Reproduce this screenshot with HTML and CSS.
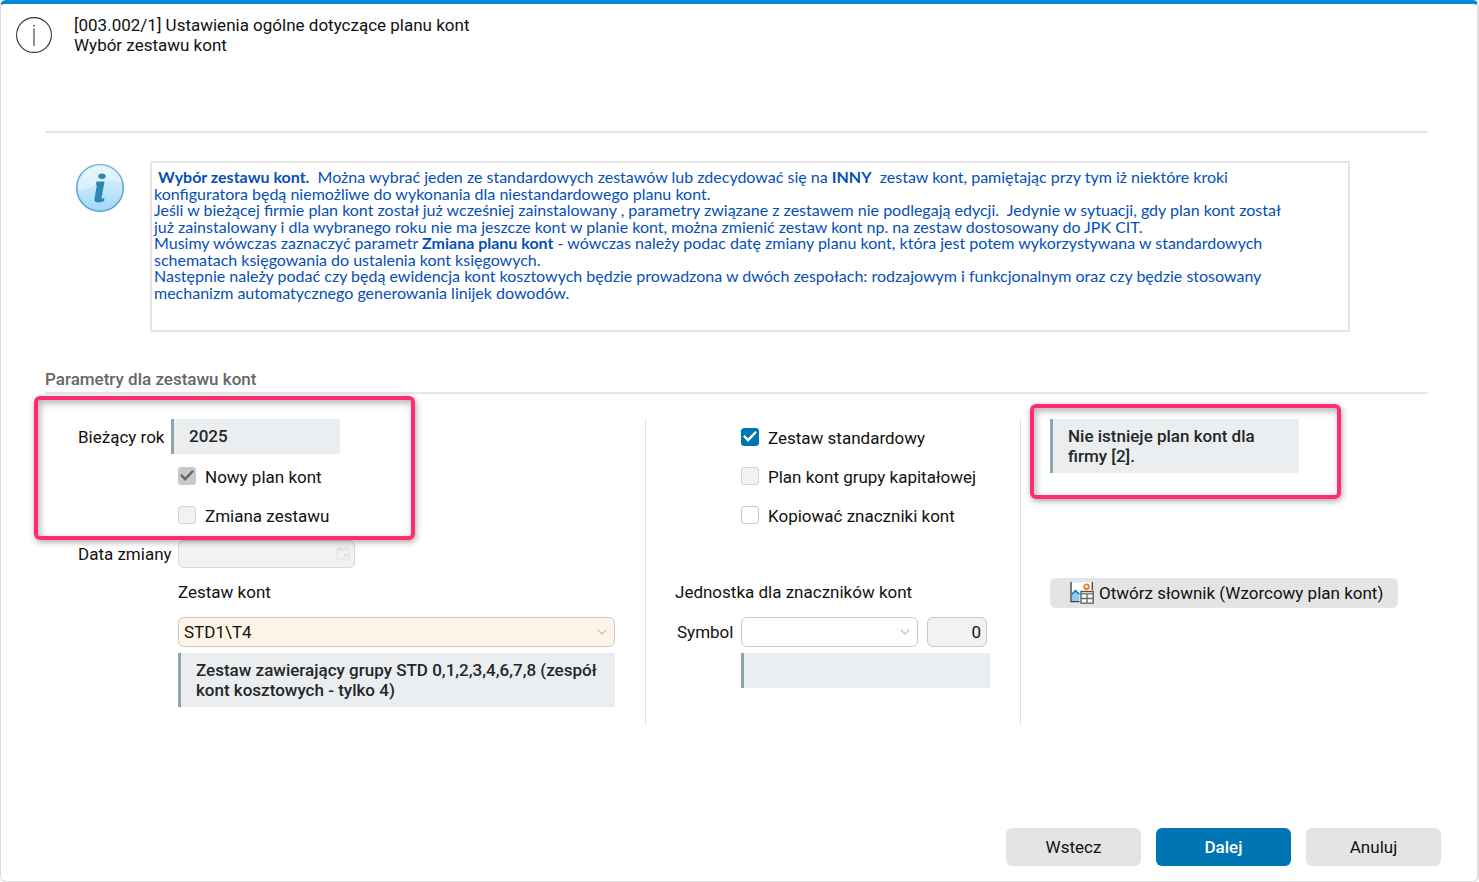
FILE: index.html
```
<!DOCTYPE html>
<html lang="pl">
<head>
  <meta charset="UTF-8">
  <meta name="viewport" content="width=device-width, initial-scale=1">
  <title>Ustawienia ogólne dotyczące planu kont</title>
  <link rel="stylesheet" href="styles.css">
</head>
<body>
  <form class="dialog">
    <header class="dialog-header">
      <svg class="header-icon" viewBox="0 0 36 36" aria-hidden="true">
        <circle cx="18" cy="18" r="17.4" fill="none" stroke="#333" stroke-width="1.1"/>
        <path d="M18 11.5V29" stroke="#555" stroke-width="1.3"/>
        <path d="M18 8V9.5" stroke="#555" stroke-width="1.6"/>
      </svg>
      <h1 class="title">[003.002/1] Ustawienia ogólne dotyczące planu kont<br>Wybór zestawu kont</h1>
    </header>

    <main class="content">
      <section class="info">
        <svg class="info-icon" viewBox="0 0 48 48" aria-hidden="true">
          <defs>
            <linearGradient id="ball" x1="0" y1="0" x2="0" y2="1">
              <stop offset="0" stop-color="#e4f5fd"/>
              <stop offset="0.5" stop-color="#c3e7fa"/>
              <stop offset="1" stop-color="#a0d7f7"/>
            </linearGradient>
          </defs>
          <circle cx="24" cy="24" r="23.3" fill="url(#ball)" stroke="#4ba3cb" stroke-width="1.4"/>
          <path d="M2 27C8 25 17 23 24 19C32 15 40 16 46 18A22.4 22.4 0 0 0 2 20Z" fill="#e8f7fe" opacity="0.6"/>
          <ellipse cx="26" cy="12.3" rx="3.7" ry="2.7" fill="#2b87b0"/>
          <path d="M20.5 17.5H28.5L25.6 33.8C25.4 35 27 34.5 28.4 34L28 37C24 39.2 18 39 18.4 35.2L20.8 21.2L19.8 20.5Z" fill="#2b87b0"/>
        </svg>
        <div class="info-text">
          <p>&nbsp;<b>Wybór zestawu kont.</b>&nbsp; Można wybrać jeden ze standardowych zestawów lub zdecydować się na <b>INNY</b>&nbsp; zestaw kont, pamiętając przy tym iż niektóre kroki<br>konfiguratora będą niemożliwe do wykonania dla niestandardowego planu kont.</p>
          <p>Jeśli w bieżącej firmie plan kont został już wcześniej zainstalowany , parametry związane z zestawem nie podlegają edycji.&nbsp; Jedynie w sytuacji, gdy plan kont został<br>już zainstalowany i dla wybranego roku nie ma jeszcze kont w planie kont, można zmienić zestaw kont np. na zestaw dostosowany do JPK CIT.</p>
          <p>Musimy wówczas zaznaczyć parametr <b>Zmiana planu kont</b> - wówczas należy podac datę zmiany planu kont, która jest potem wykorzystywana w standardowych<br>schematach księgowania do ustalenia kont księgowych.</p>
          <p>Następnie należy podać czy będą ewidencja kont kosztowych będzie prowadzona w dwóch zespołach: rodzajowym i funkcjonalnym oraz czy będzie stosowany<br>mechanizm automatycznego generowania linijek dowodów.</p>
        </div>
      </section>

      <h2 class="section-title">Parametry dla zestawu kont</h2>

      <div class="params">
        <section class="column column-set">
          <div class="row-year">
            <span>Bieżący rok</span>
            <output class="readout readout-year">2025</output>
          </div>
          <div class="checks">
            <label class="check"><input type="checkbox" checked disabled><span>Nowy plan kont</span></label>
            <label class="check"><input type="checkbox" disabled><span>Zmiana zestawu</span></label>
          </div>
          <div class="row-date">
            <label for="date">Data zmiany</label>
            <div class="field field-date">
              <input type="text" id="date" disabled>
              <svg class="calendar" viewBox="0 0 14 14" aria-hidden="true">
                <path d="M1 2.5H13V13H1Z" fill="none" stroke="#e2e2e2" stroke-width="1.2"/>
                <path d="M1 3.5H13M3.5 0V3M10.5 0V3" stroke="#e2e2e2" stroke-width="2"/>
                <path d="M8 8H11V11H8Z" fill="#e2e2e2"/>
              </svg>
            </div>
          </div>
          <div class="set-fields">
            <label class="field-title" for="set">Zestaw kont</label>
            <div class="field">
              <select id="set" class="required">
                <option>STD1\T4</option>
              </select>
              <svg class="chevron" viewBox="0 0 10 6" aria-hidden="true"><path d="M0.7 0.7L5 5L9.3 0.7"/></svg>
            </div>
            <output class="readout">Zestaw zawierający grupy STD 0,1,2,3,4,6,7,8 (zespół kont kosztowych - tylko 4)</output>
          </div>
          <div class="highlight highlight-year"></div>
        </section>

        <section class="column column-unit">
          <div class="checks">
            <label class="check"><input type="checkbox" checked><span>Zestaw standardowy</span></label>
            <label class="check"><input type="checkbox" disabled><span>Plan kont grupy kapitałowej</span></label>
            <label class="check"><input type="checkbox"><span>Kopiować znaczniki kont</span></label>
          </div>
          <h3 class="field-title">Jednostka dla znaczników kont</h3>
          <div class="row-symbol">
            <label for="symbol">Symbol</label>
            <div class="field field-symbol">
              <select id="symbol">
                <option></option>
              </select>
              <svg class="chevron" viewBox="0 0 10 6" aria-hidden="true"><path d="M0.7 0.7L5 5L9.3 0.7"/></svg>
            </div>
            <input type="text" class="number" value="0" aria-label="Numer jednostki" readonly>
          </div>
          <output class="readout readout-unit"></output>
        </section>

        <section class="column column-dictionary">
          <output class="readout readout-status">Nie istnieje plan kont dla firmy [2].</output>
          <button type="button" class="btn-dictionary">
            <svg class="dictionary-icon" viewBox="0 0 24 22" aria-hidden="true">
              <path d="M1 0.5H22.5V9H10V19.5H1Z" fill="#fff"/>
              <path d="M1 0V19.5H9.5M22.3 0V8" fill="none" stroke="#444" stroke-width="1.4"/>
              <path d="M2 19V12L5.5 8.5L9.5 12V19Z" fill="#8ecbf0"/>
              <path d="M1.8 12.3L5.5 8.6L9.3 12.2" fill="none" stroke="#1a70b8" stroke-width="1.5"/>
              <circle cx="16.5" cy="4.7" r="2.3" fill="#fff" stroke="#ec7d25" stroke-width="1.8"/>
              <path d="M11 9.5H23.2V21.2H11Z" fill="#fff" stroke="#555" stroke-width="1.3"/>
              <path d="M11 11.8H23M11 16.5H23M17 12V21" stroke="#666" stroke-width="1.3"/>
            </svg>
            Otwórz słownik (Wzorcowy plan kont)
          </button>
          <div class="highlight highlight-status"></div>
        </section>
      </div>
    </main>

    <footer class="actions">
      <button type="button" class="btn">Wstecz</button>
      <button type="submit" class="btn btn-primary">Dalej</button>
      <button type="button" class="btn">Anuluj</button>
    </footer>
  </form>
</body>
</html>
```
FILE: styles.css
```
* {
  box-sizing: border-box;
}
body {
  margin: 0;
  background: #fff;
  color: #111;
  font-family: Roboto, "Liberation Sans", sans-serif;
  font-size: 17px;
  line-height: 20px;
}
h1, h2, h3, p {
  margin: 0;
  font: inherit;
}
input, select, button {
  margin: 0;
  font: inherit;
  color: inherit;
}

.dialog {
  display: flex;
  flex-direction: column;
  min-height: 100vh;
  border: 1px solid #dcdcdc;
  border-top: 4px solid #008bd6;
  border-right-width: 2px;
  border-radius: 6px;
}
.dialog-header {
  display: flex;
  gap: 22px;
  height: 127px;
  padding: 11px 15px;
}
.header-icon {
  width: 36px;
  height: 36px;
  margin-top: 2px;
}
.content {
  flex: 1;
  margin: 0 49px 0 44px;
  border-top: 2px solid #e6e6e6;
}

/* info box */
.info {
  display: flex;
  gap: 26px;
  padding: 28px 78px 0 31px;
}
.info-icon {
  flex: none;
  width: 48px;
  height: 48px;
  margin-top: 3px;
}
.info-text {
  flex: 1;
  min-height: 171px;
  padding: 5px 2px;
  border: 2px solid #e6e6e6;
  color: #0550b8;
  font-family: Lato, "Open Sans", sans-serif;
  font-size: 16px;
  line-height: 17px;
}
.info-text p {
  margin-bottom: -1px;
}

.section-title {
  margin-top: 37px;
  padding-bottom: 3px;
  border-bottom: 2px solid #e6e6e6;
  color: #666;
  font-weight: 500;
}

/* parameters */
.params {
  display: grid;
  grid-template-columns: 600fr 375fr 408fr;
  min-height: 306px;
  margin-top: 25px;
}
.column {
  position: relative;
  display: flex;
  flex-direction: column;
}
.column + .column {
  border-left: 1px solid #dfdfdf;
}
.column-set {
  padding: 0 30px 0 33px;
}
.column-unit {
  padding-left: 29px;
}
.column-dictionary {
  align-items: flex-start;
  justify-content: flex-start;
  padding: 0 30px 0 29px;
}
.readout {
  display: block;
  min-height: 35px;
  padding: 7px 15px;
  border-left: 3px solid #90a4ae;
  background: #eaeef1;
  color: #262626;
  font-weight: 500;
}
.row-year {
  display: grid;
  grid-template-columns: 93px 169px;
  align-items: center;
}
.row-date {
  display: grid;
  grid-template-columns: 100px 177px;
  align-items: center;
  margin-top: 6px;
}
.column-set .checks {
  margin: 2px 0 0 100px;
}
.column-unit .checks {
  margin: -2px 0 48px 66px;
}
.check {
  display: flex;
  align-items: center;
  gap: 9px;
  height: 39px;
}
.check span {
  padding-top: 2px;
}
.check input {
  appearance: none;
  display: grid;
  place-items: center;
  flex: none;
  width: 18px;
  height: 18px;
  border: 1px solid #c8c8c8;
  border-radius: 3px;
  background: #fff;
}
.check input:disabled {
  border-color: #d5d5d5;
  background: #f2f2f2;
}
.check input:checked {
  border-color: #0075b3;
  background: #0075b3;
  color: #fff;
}
.check input:checked:disabled {
  border-color: #c8c8c8;
  background: #c8c8c8;
  color: #666;
}
.check input:checked::before {
  content: "";
  width: 14px;
  height: 11px;
  background: currentColor;
  clip-path: polygon(0 50%, 12% 36%, 36% 67%, 88% 0, 100% 13%, 36% 100%);
}

.field {
  position: relative;
}
.field input, .field select, .number {
  appearance: none;
  display: block;
  width: 100%;
  height: 30px;
  padding: 0 5px;
  border: 1px solid #c8c8c8;
  border-radius: 6px;
  background: #fff;
}
.field input:disabled {
  height: 28px;
  border-color: #d8d8d8;
  background: #f2f2f2;
}
.field .required {
  background: #fff5e6;
}
.chevron {
  position: absolute;
  top: 12px;
  right: 8px;
  width: 10px;
  height: 6px;
  fill: none;
  stroke: #c4c4c4;
  stroke-width: 1.3;
  pointer-events: none;
}
.calendar {
  position: absolute;
  top: 6px;
  right: 5px;
  width: 14px;
  height: 14px;
}
.set-fields {
  margin: 14px 0 0 100px;
}
.field-title {
  display: block;
  margin-bottom: 15px;
}
.set-fields .readout, .readout-unit {
  margin-top: 6px;
}
.row-symbol {
  display: flex;
  align-items: center;
}
.row-symbol label {
  width: 66px;
  padding-left: 2px;
}
.field-symbol {
  width: 177px;
  margin-right: 9px;
}
.number {
  width: 60px;
  background: #f2f2f2;
  text-align: right;
}
.readout-unit {
  width: 249px;
  margin-left: 66px;
}
.readout-status {
  width: 249px;
}

/* buttons */
.btn-dictionary {
  display: flex;
  align-items: center;
  gap: 5px;
  width: 100%;
  height: 30px;
  margin-top: 105px;
  padding: 0 10px 0 20px;
  border: 0;
  border-radius: 6px;
  background: #e4e4e4;
  white-space: nowrap;
}
.dictionary-icon {
  flex: none;
  width: 24px;
  height: 22px;
}
.actions {
  display: flex;
  justify-content: flex-end;
  gap: 15px;
  padding: 0 36px 15px;
}
.btn {
  width: 135px;
  height: 38px;
  border: 0;
  border-radius: 6px;
  background: #e4e4e4;
}
.btn-primary {
  background: #0075b3;
  color: #fff;
  font-weight: 500;
}

/* red frames drawn over the form */
.highlight {
  position: absolute;
  border: 4px solid #ff2d6b;
  border-radius: 6px;
  box-shadow: 1px 2px 6px rgba(0, 0, 0, 0.35), inset 2px 3px 7px rgba(0, 0, 0, 0.3);
  pointer-events: none;
}
.highlight-year {
  top: -23px;
  left: -11px;
  width: 381px;
  height: 144px;
}
.highlight-status {
  top: -15px;
  left: 9px;
  width: 311px;
  height: 95px;
}
```
